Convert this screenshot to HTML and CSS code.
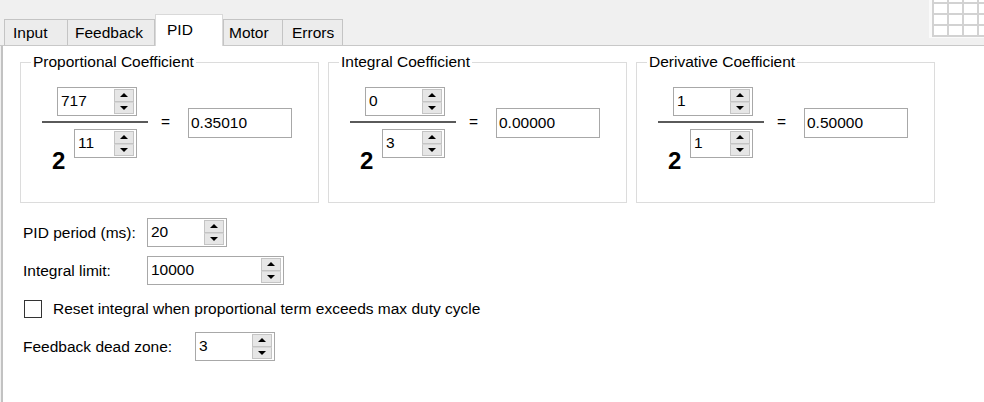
FILE: index.html
```html
<!DOCTYPE html>
<html lang="en">
<head>
    <meta charset="UTF-8">
    <meta name="viewport" content="width=device-width, initial-scale=1.0">
    <title>PID</title>
    <link rel="stylesheet" href="styles.css">
</head>
<body>
    <!-- Tab strip -->
    <div class="header">
        <div class="tabs">
            <div class="tab tab-input">Input</div>
            <div class="tab tab-feedback">Feedback</div>
            <div class="tab tab-pid active">PID</div>
            <div class="tab tab-motor">Motor</div>
            <div class="tab tab-errors">Errors</div>
        </div>
        <div class="corner">
            <div class="corner-grid">
                <span></span><span></span><span></span><span></span>
                <span></span><span></span><span></span><span></span>
                <span></span><span></span><span></span><span></span>
                <span></span><span></span><span></span><span></span>
            </div>
        </div>
    </div>

    <div class="panel">
        <!-- Coefficients -->
        <div class="groups">
            <fieldset class="group">
                <legend>Proportional Coefficient</legend>
                <div class="coef">
                    <div class="fraction">
                        <div class="spin num"><span class="spin-val">717</span><span class="spin-btns"><span class="spin-up"></span><span class="spin-down"></span></span></div>
                        <div class="bar"></div>
                        <div class="denom">
                            <span class="base">2</span>
                            <div class="spin spin-small"><span class="spin-val">11</span><span class="spin-btns"><span class="spin-up"></span><span class="spin-down"></span></span></div>
                        </div>
                    </div>
                    <span class="eq">=</span>
                    <div class="result">0.35010</div>
                </div>
            </fieldset>

            <fieldset class="group">
                <legend>Integral Coefficient</legend>
                <div class="coef">
                    <div class="fraction">
                        <div class="spin num"><span class="spin-val">0</span><span class="spin-btns"><span class="spin-up"></span><span class="spin-down"></span></span></div>
                        <div class="bar"></div>
                        <div class="denom">
                            <span class="base">2</span>
                            <div class="spin spin-small"><span class="spin-val">3</span><span class="spin-btns"><span class="spin-up"></span><span class="spin-down"></span></span></div>
                        </div>
                    </div>
                    <span class="eq">=</span>
                    <div class="result">0.00000</div>
                </div>
            </fieldset>

            <fieldset class="group">
                <legend>Derivative Coefficient</legend>
                <div class="coef">
                    <div class="fraction">
                        <div class="spin num"><span class="spin-val">1</span><span class="spin-btns"><span class="spin-up"></span><span class="spin-down"></span></span></div>
                        <div class="bar"></div>
                        <div class="denom">
                            <span class="base">2</span>
                            <div class="spin spin-small"><span class="spin-val">1</span><span class="spin-btns"><span class="spin-up"></span><span class="spin-down"></span></span></div>
                        </div>
                    </div>
                    <span class="eq">=</span>
                    <div class="result">0.50000</div>
                </div>
            </fieldset>
        </div>

        <!-- Other settings -->
        <div class="fields">
            <div class="field">
                <span class="field-label">PID period (ms):</span>
                <div class="spin"><span class="spin-val">20</span><span class="spin-btns"><span class="spin-up"></span><span class="spin-down"></span></span></div>
            </div>
            <div class="field">
                <span class="field-label">Integral limit:</span>
                <div class="spin spin-wide"><span class="spin-val">10000</span><span class="spin-btns"><span class="spin-up"></span><span class="spin-down"></span></span></div>
            </div>
            <div class="field">
                <span class="check"></span>
                <span>Reset integral when proportional term exceeds max duty cycle</span>
            </div>
            <div class="field">
                <span class="field-label long">Feedback dead zone:</span>
                <div class="spin"><span class="spin-val">3</span><span class="spin-btns"><span class="spin-up"></span><span class="spin-down"></span></span></div>
            </div>
        </div>
    </div>
</body>
</html>
```

FILE: styles.css
```css
/* Dasar */
* {
    box-sizing: border-box;
}

body {
    margin: 0;
    width: 984px;
    height: 402px;
    overflow: hidden;
    display: flex;
    flex-direction: column;
    background-color: #f0f0f0;
    font-family: "Liberation Sans", Arial, sans-serif;
    font-size: 15.5px;
    color: #000;
}

/* Tab strip */
.header {
    display: flex;
    height: 46px;
    border-bottom: 1px solid #c8c8c8;
}

.tabs {
    display: flex;
    align-items: flex-end;
    padding-left: 4px;
}

.tab {
    height: 26px;
    display: flex;
    align-items: center;
    border: 1px solid #c4c4c4;
    border-bottom: none;
    background-color: #ececec;
    white-space: nowrap;
}

.tab-input { width: 64px; padding-left: 8px; }
.tab-feedback { width: 87px; padding-left: 7px; border-left: none; }
.tab-pid { width: 68px; padding-left: 11px; }
.tab-motor { width: 60px; padding-left: 5px; }
.tab-errors { width: 60px; padding-left: 9px; border-left: none; }

.tab.active {
    height: 32px;
    margin-bottom: -1px;
    background-color: #fff;
    border-color: #d9d9d9;
    padding-bottom: 2px;
}

.corner {
    margin-left: auto;
    width: 55px;
    height: 38px;
    padding-left: 3px;
    overflow: hidden;
    background-color: #fafafa;
}

.corner-grid {
    display: grid;
    grid-template-columns: repeat(4, 13px);
    grid-template-rows: repeat(4, 9px);
    gap: 2px;
    width: max-content;
    margin-top: -7px;
    padding: 0 0 2px 2px;
    background-color: #d2d2d2;
}

.corner-grid span {
    background-color: #fff;
}

/* Panel */
.panel {
    flex: 1;
    margin-left: 1px;
    border-left: 2px solid #c2c2c2;
    background-color: #fff;
    padding: 8px 0 0 17px;
}

.groups {
    display: flex;
    gap: 9px;
}

.group {
    width: 299px;
    margin: 0;
    padding: 17px 0 29px 10px;
    border: 1px solid #dcdcdc;
    min-width: 0;
}

.group legend {
    padding: 0 2px;
    line-height: 16px;
}

.coef {
    display: flex;
    align-items: flex-start;
    margin-left: 11px;
}

.fraction {
    width: 106px;
    display: flex;
    flex-direction: column;
}

.num {
    margin-left: 15px;
}

.bar {
    height: 2px;
    margin-top: 5px;
    background-color: #5a5a5a;
}

.denom {
    display: flex;
    align-items: flex-start;
    margin-top: 6px;
    padding-left: 10px;
}

.base {
    width: 22px;
    margin-top: 20px;
    font-size: 24px;
    line-height: 24px;
    font-weight: bold;
}

.eq {
    width: 15px;
    margin: 27px 15px 0 10px;
    text-align: center;
    line-height: 16px;
}

.result {
    width: 104px;
    height: 30px;
    margin-top: 21px;
    padding-left: 2px;
    padding-bottom: 1px;
    display: flex;
    align-items: center;
    border: 1px solid #a8a8a8;
}

/* Spin box */
.spin {
    display: flex;
    width: 80px;
    height: 29px;
    border: 1px solid #a8a8a8;
    background-color: #fff;
}

.spin-small { width: 63px; }
.spin-wide { width: 137px; }

.spin-val {
    flex: 1;
    display: flex;
    align-items: center;
    padding-left: 3px;
    padding-bottom: 2px;
}

.spin-btns {
    width: 20px;
    margin: 1px 2px 1px 0;
    display: flex;
    flex-direction: column;
}

.spin-up,
.spin-down {
    flex: 1;
    display: flex;
    align-items: center;
    justify-content: center;
    background-color: #e6e6e6;
    border: 1px solid #c4c4c4;
}

.spin-down {
    border-top: 1px solid #d6d6d6;
}

.spin-up::after {
    content: "";
    border-left: 4px solid transparent;
    border-right: 4px solid transparent;
    border-bottom: 4px solid #000;
}

.spin-down::after {
    content: "";
    border-left: 4px solid transparent;
    border-right: 4px solid transparent;
    border-top: 4px solid #000;
}

/* Fields */
.fields {
    display: flex;
    flex-direction: column;
    gap: 9px;
    margin-top: 15px;
    padding-left: 3px;
}

.field {
    display: flex;
    align-items: center;
    height: 29px;
    white-space: nowrap;
}

.field-label {
    width: 124px;
}

.field-label.long {
    width: 172px;
}

.check {
    width: 18px;
    height: 18px;
    margin: 0 11px 0 1px;
    border: 1px solid #333;
    background-color: #fff;
}
```
